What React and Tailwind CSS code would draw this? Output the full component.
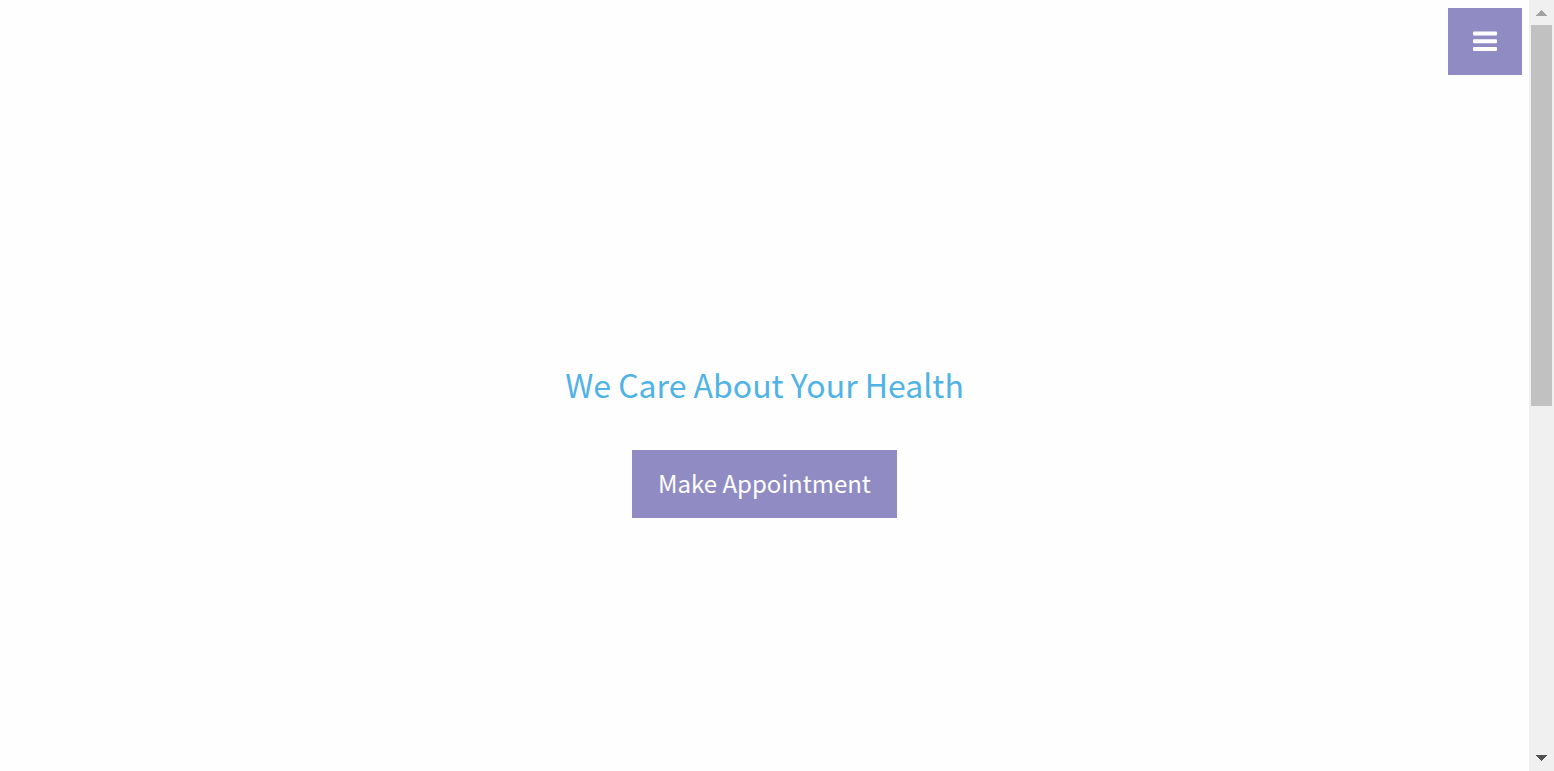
function MenuButton() {
  return (
    <button
      type="button"
      aria-label="Open menu"
      className="flex cursor-pointer items-center justify-center bg-[#908cc3] px-[25px] pt-[23px] pb-6"
    >
      <svg viewBox="0 0 24 20" className="h-5 w-6" fill="#fefefe" aria-hidden="true">
        <rect x="0" y="0.4" width="24" height="4" rx="1" />
        <rect x="0" y="8.2" width="24" height="4" rx="1" />
        <rect x="0" y="16" width="24" height="4" rx="1" />
      </svg>
    </button>
  );
}

function Hero() {
  return (
    <main className="flex flex-1 flex-col items-center pt-[284px]">
      <h1 className="text-center text-[32px] leading-[50px] text-[#4fb3e5]">
        We Care About Your Health
      </h1>
      <a
        href="#appointment"
        className="mt-[41px] bg-[#908cc3] px-[26px] pt-5 pb-[22px] text-[24px] leading-[26px] text-[#fefefe]"
      >
        Make Appointment
      </a>
    </main>
  );
}

function ScrollRail() {
  return (
    <div className="flex w-[25px] shrink-0 flex-col bg-[#f0f0f0]" aria-hidden="true">
      <div className="flex h-[25px] items-center justify-center">
        <svg viewBox="0 0 11 6" className="h-[6px] w-[11px]" fill="#a3a3a3" shapeRendering="crispEdges">
          <path d="M5.5 0 11 6H0Z" />
        </svg>
      </div>
      <div className="mx-[2px] grow-[381] basis-0 bg-[#c1c1c1]" />
      <div className="grow-[340] basis-0" />
      <div className="flex h-[25px] items-center justify-center pb-[2px]">
        <svg viewBox="0 0 11 6" className="h-[6px] w-[11px]" fill="#505050" shapeRendering="crispEdges">
          <path d="M0 0H11L5.5 6Z" />
        </svg>
      </div>
    </div>
  );
}

export default function App() {
  return (
    <div className="flex min-h-screen bg-[#fefefe] font-['Noto_Sans_CJK_SC',sans-serif]">
      <div className="flex min-w-0 flex-1 flex-col">
        <header className="flex justify-end pt-2 pr-[7px]">
          <MenuButton />
        </header>
        <Hero />
      </div>
      <ScrollRail />
    </div>
  );
}
